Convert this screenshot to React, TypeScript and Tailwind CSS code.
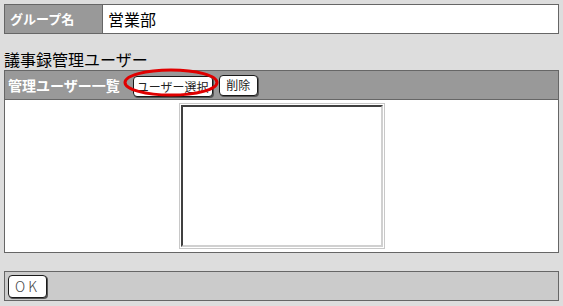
import React from 'react';

const font = { fontFamily: '"MS PGothic", "Noto Sans CJK JP", "DejaVu Sans", sans-serif' };

function OldButton({ children, className = '' }: { children: React.ReactNode; className?: string }) {
  return (
    <button
      className={`h-[21px] rounded-[4px] border border-[#1a1a1a] bg-white text-[12px] leading-none text-[#222] shadow-[1px_1px_0_#555] ${className}`}
    >
      {children}
    </button>
  );
}

export default function App() {
  return (
    <div className="h-[306px] w-[563px] bg-[#dddddd] pt-[4px] pl-[4px] pr-[4px]" style={font}>
      {/* group name row */}
      <div className="flex h-[30px] w-[555px] border border-[#666666] bg-white">
        <div className="flex w-[98px] items-center border-r border-[#666666] bg-[#999999] pl-[5px] text-[13px] font-bold text-white">
          グループ名
        </div>
        <div className="flex items-center pl-[5px] text-[16px] text-black">営業部</div>
      </div>

      <div className="mt-[14px] h-[22px] text-[16px] leading-[22px] text-black">議事録管理ユーザー</div>

      {/* managers box */}
      <div className="w-[555px] border border-[#666666] bg-white">
        <div className="flex h-[29px] items-center border-b border-[#666666] bg-[#999999] pl-[3px]">
          <span className="text-[14px] font-bold text-white">管理ユーザー一覧</span>
          <div className="relative ml-[13px]">
            <OldButton className="w-[80px]">ユーザー選択</OldButton>
            <svg className="pointer-events-none absolute left-[-10px] top-[-5px]" width="96" height="29" viewBox="0 0 96 29">
              <ellipse cx="48" cy="14.5" rx="46" ry="12.5" fill="none" stroke="#e00000" strokeWidth="3" />
            </svg>
          </div>
          <OldButton className="ml-[6px] w-[39px]">削除</OldButton>
        </div>
        <div className="flex h-[152px] justify-center pt-[3px]">
          <div className="h-[146px] w-[206px] border border-[#c8c8c8] p-[1px]">
            <div className="h-full w-full border-t-2 border-l-2 border-b-2 border-r-2 border-t-[#404040] border-l-[#404040] border-b-[#d0d0d0] border-r-[#d0d0d0] bg-white" />
          </div>
        </div>
      </div>

      {/* footer */}
      <div className="mt-[18px] flex h-[30px] w-[555px] items-center border border-[#666666] bg-[#cbcbcb] pl-[3px]">
        <OldButton className="h-[23px] w-[39px] text-[14px] font-light tracking-[3px] text-[#444]">OK</OldButton>
      </div>
    </div>
  );
}
